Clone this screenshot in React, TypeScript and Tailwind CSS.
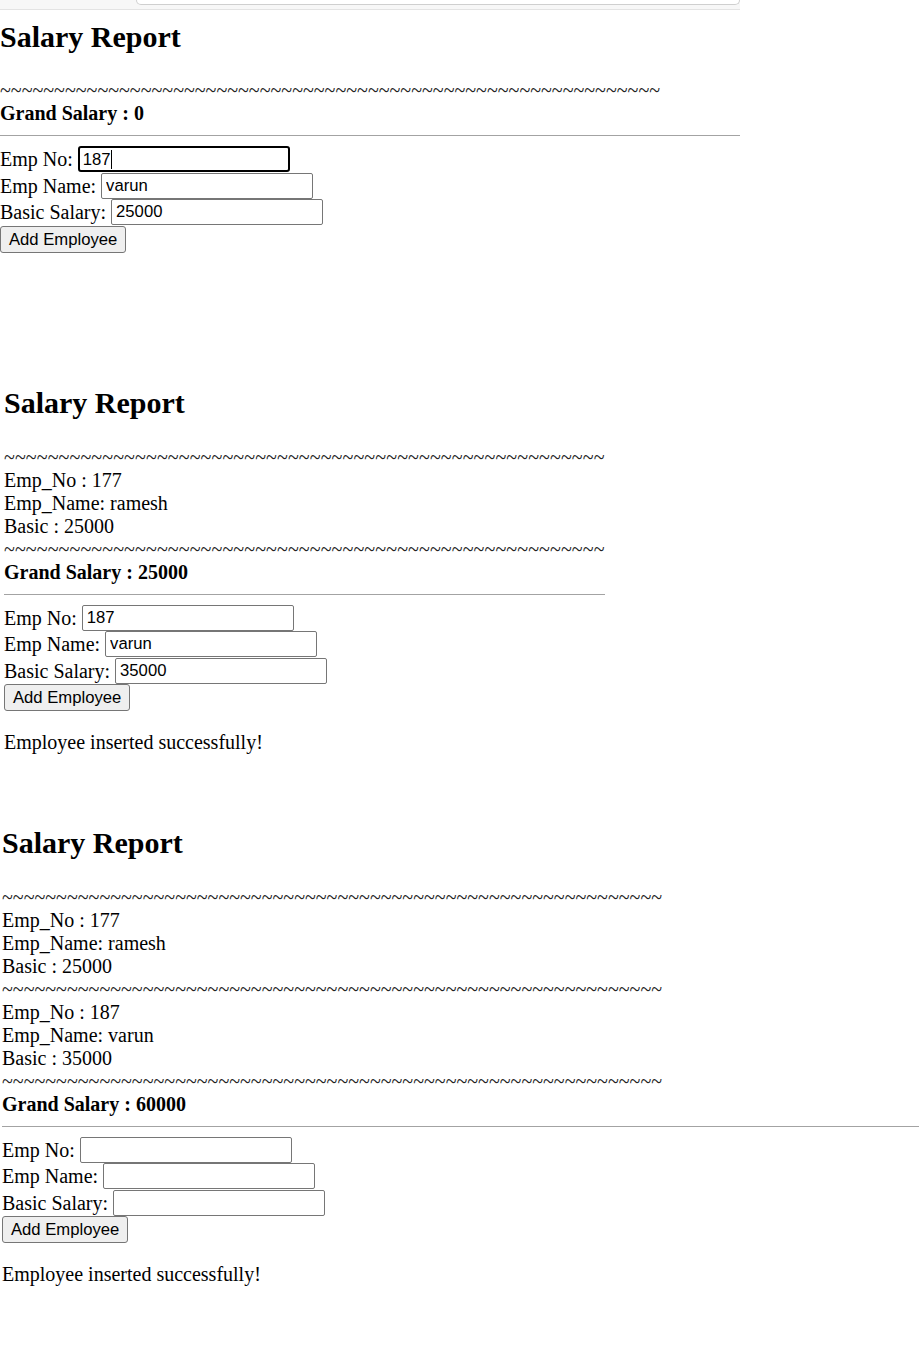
type Emp = { no: string; name: string; basic: string };

type FieldProps = { label: string; value: string; focused?: boolean };

function Field({ label, value, focused }: FieldProps) {
  return (
    <div className="flex items-center h-[26.5px]">
      <span className="mr-[5px]">{label}</span>
      {focused ? (
        <div className="flex items-center w-[212px] h-[26px] border-2 border-black rounded-[3px] px-[3px] font-['Liberation_Sans',Arial,sans-serif] text-[16.67px] text-black">
          <span>{value}</span>
          <span className="w-px h-[19px] bg-black" />
        </div>
      ) : (
        <input
          readOnly
          defaultValue={value}
          className="w-[212px] h-[26px] border border-[#767676] rounded-[2px] px-[4px] bg-white font-['Liberation_Sans',Arial,sans-serif] text-[16.67px] text-black outline-none"
        />
      )}
    </div>
  );
}

type ReportProps = {
  tildes: number;
  wide?: boolean;
  employees: Emp[];
  grand: string;
  form: { no: string; name: string; basic: string };
  focusFirst?: boolean;
  message?: boolean;
};

function Report({ tildes, wide, employees, grand, form, focusFirst, message }: ReportProps) {
  const line = "~".repeat(tildes);
  const tildeCls = wide ? "text-[#222] tracking-[0.1px]" : "text-[#222]";
  return (
    <div>
      <div className="leading-[23px] text-[20px] whitespace-nowrap">
        <div className={tildeCls}>{line}</div>
        {employees.map((e) => (
          <div key={e.no}>
            <div>Emp_No : {e.no}</div>
            <div>Emp_Name: {e.name}</div>
            <div>Basic : {e.basic}</div>
            <div className={tildeCls}>{line}</div>
          </div>
        ))}
        <div className="font-bold">Grand Salary : {grand}</div>
      </div>

      <hr className="my-[10px] border-0 border-t-[1.5px] border-[#a3a3a3]" />

      <div className="text-[20px]">
        <Field label="Emp No:" value={form.no} focused={focusFirst} />
        <Field label="Emp Name:" value={form.name} />
        <Field label="Basic Salary:" value={form.basic} />
        <button className="block h-[27px] px-[8px] bg-[#efefef] border border-[#767676] rounded-[3px] font-['Liberation_Sans',Arial,sans-serif] text-[16.67px] text-black">
          Add Employee
        </button>
        {message && <p className="mt-[20px] leading-[23px]">Employee inserted successfully!</p>}
      </div>
    </div>
  );
}

export default function App() {
  const ramesh = { no: "177", name: "ramesh", basic: "25000" };
  const varun = { no: "187", name: "varun", basic: "35000" };

  return (
    <div className="w-[919px] min-h-[1363px] bg-white text-black font-['Liberation_Serif','Times_New_Roman',serif]">
      {/* first capture: empty list, typing into the form */}
      <section className="w-[740px] h-[361px]">
        <div className="h-[10px] bg-[#f7f7f7] border-b border-[#e3e3e3]">
          <div className="ml-[136px] h-[5px] bg-white border border-t-0 border-[#cfcfcf] rounded-b-[8px]" />
        </div>
        <h2 className="mt-[9.6px] mb-[25px] text-[30px] leading-[34.5px] font-bold">Salary Report</h2>
        <Report
          tildes={61}
          employees={[]}
          grand="0"
          form={{ no: "187", name: "varun", basic: "25000" }}
          focusFirst
        />
      </section>

      {/* second capture: one employee inserted */}
      <section className="h-[440px] pt-[25px] pl-[4px] w-[605px]">
        <h2 className="mb-[25px] text-[30px] leading-[34.5px] font-bold">Salary Report</h2>
        <Report
          tildes={55}
          wide
          employees={[ramesh]}
          grand="25000"
          form={{ no: "187", name: "varun", basic: "35000" }}
          message
        />
      </section>

      {/* third capture: two employees, form cleared */}
      <section className="pt-[25px] pl-[2px]">
        <h2 className="mb-[25px] text-[30px] leading-[34.5px] font-bold">Salary Report</h2>
        <Report
          tildes={61}
          employees={[ramesh, varun]}
          grand="60000"
          form={{ no: "", name: "", basic: "" }}
          message
        />
      </section>
    </div>
  );
}
